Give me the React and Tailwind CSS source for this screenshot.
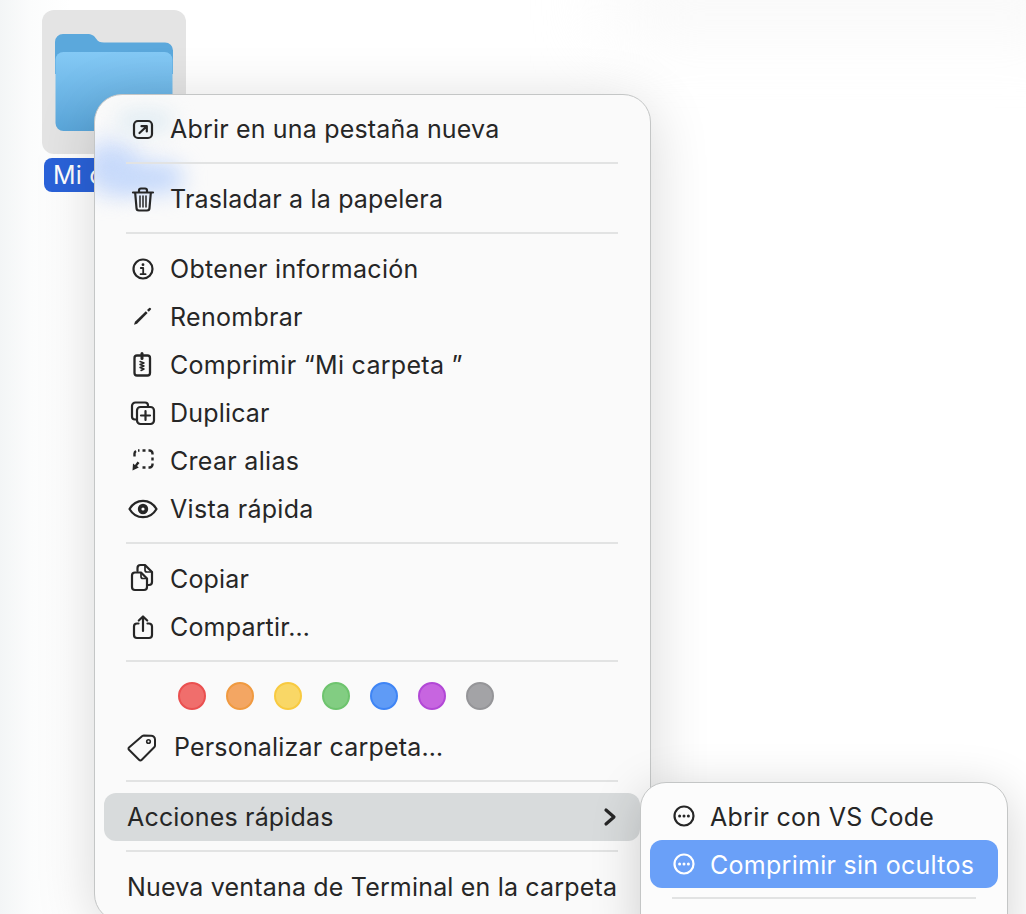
const S = "fill-none stroke-[#262626] stroke-[2] [stroke-linecap:round] [stroke-linejoin:round]";

function Ico({ children, className = "" }) {
  return (
    <svg viewBox="0 0 32 32" className={"w-8 h-8 shrink-0 " + S + " " + className}>
      {children}
    </svg>
  );
}

const icons = {
  open: (
    <Ico>
      <rect x="7" y="8" width="18" height="17" rx="4" strokeWidth="2.2" />
      <path d="M12.5 20 19.5 13.5M14.5 13.2H19.8V18.5" strokeWidth="2.2" />
    </Ico>
  ),
  trash: (
    <Ico>
      <path d="M6 9.5H26M12 9V7.5A2 2 0 0 1 14 5.5H18A2 2 0 0 1 20 7.5V9" strokeWidth="2.2" />
      <path d="M8.2 10 9.5 25A2.5 2.5 0 0 0 12 27.5H20A2.5 2.5 0 0 0 22.5 25L23.8 10" strokeWidth="2.2" />
      <path d="M13 13V24M16 13V24M19 13V24" strokeWidth="1.5" />
    </Ico>
  ),
  info: (
    <Ico>
      <circle cx="16" cy="16" r="9.5" strokeWidth="2.2" />
      <circle cx="16" cy="11.7" r="1.4" className="fill-[#262626] stroke-none" />
      <path d="M13.8 15H16.2V21M13.6 21.2H18.6" strokeWidth="1.8" />
    </Ico>
  ),
  pencil: (
    <Ico>
      <path d="M7 23.8 8 20.8 18.8 10.2 20.6 12 10 22.8Z" className="fill-[#262626] stroke-none" />
      <path d="M20 9 22.2 6.9A0.9 0.9 0 0 1 23.4 6.9L23.9 7.4A0.9 0.9 0 0 1 23.9 8.6L21.8 10.8Z" className="fill-[#262626] stroke-none" />
    </Ico>
  ),
  zip: (
    <Ico>
      <rect x="7.5" y="6.5" width="15.5" height="20" rx="2.5" strokeWidth="2.3" />
      <path d="M15 4.5V9.5" strokeWidth="3" />
      <path d="M13 12.5 17 14 13 15.5 17 17 13 18.5 17 20 14 21.5" strokeWidth="1.4" />
    </Ico>
  ),
  dup: (
    <Ico>
      <path d="M9.5 22.5H8A3 3 0 0 1 5 19.5V9A3.5 3.5 0 0 1 8.5 5.5H18A3 3 0 0 1 21 8.5V9.5" strokeWidth="2.2" />
      <rect x="10" y="10" width="17" height="17" rx="3.5" strokeWidth="2.2" />
      <path d="M18.5 14V23M14 18.5H23" strokeWidth="2.2" />
    </Ico>
  ),
  alias: (
    <Ico>
      <path
        d="M11 5.5H12.5M15.5 5.5H18.5M21.5 5.5H22.5A3 3 0 0 1 25.5 8.5V9.5M25.5 12.5V15.5M25.5 18.5V19.5A3 3 0 0 1 22.5 22.5H21.5M18.5 22.5H15.5M7.5 11.5V8.5A3 3 0 0 1 9 6"
        strokeWidth="2.4"
        strokeLinecap="butt"
      />
      <path d="M5.5 25.5 6 18.5 8 20 10.5 16.5 12.5 18 10 21 11.8 22.5Z" className="fill-[#262626] stroke-none" />
    </Ico>
  ),
  eye: (
    <Ico>
      <path d="M2.5 16C5.5 10.8 10.3 7.8 16 7.8S26.5 10.8 29.5 16C26.5 21.2 21.7 24.2 16 24.2S5.5 21.2 2.5 16Z" strokeWidth="2.2" />
      <circle cx="16" cy="16" r="5.2" className="fill-[#262626] stroke-none" />
      <circle cx="16" cy="16" r="1.6" className="fill-white stroke-none" />
    </Ico>
  ),
  copy: (
    <Ico>
      <path d="M8 9.5H14L20 15.5V24A3 3 0 0 1 17 27H8A3 3 0 0 1 5 24V12.5A3 3 0 0 1 8 9.5Z" strokeWidth="2.2" />
      <path d="M14 10V13.5A2 2 0 0 0 16 15.5H19.5" strokeWidth="1.7" />
      <path d="M10.5 8V5A3 3 0 0 1 13.5 2H18L25 9V19A3 3 0 0 1 22 22H20.5" strokeWidth="2.2" />
      <path d="M18 2.5V7A2 2 0 0 0 20 9H24.5" strokeWidth="1.7" />
    </Ico>
  ),
  share: (
    <Ico>
      <path d="M11.5 12.5H10A3 3 0 0 0 7 15.5V24A3 3 0 0 0 10 27H22A3 3 0 0 0 25 24V15.5A3 3 0 0 0 22 12.5H20.5" strokeWidth="2.2" />
      <path d="M16 20V6M11.8 9.5 16 5.5 20.2 9.5" strokeWidth="2.2" />
    </Ico>
  ),
  tag: (
    <Ico>
      <path d="M2 16.5 15.3 5A3 3 0 0 1 17 4.4L24 4.8A3.8 3.8 0 0 1 28 8.6V14.4A2.5 2.5 0 0 1 27.2 16.2L14.8 28.8A2 2 0 0 1 12 28.8L2 18.8A1.6 1.6 0 0 1 2 16.5Z" />
      <circle cx="21.5" cy="10.5" r="1.8" strokeWidth="1.6" />
    </Ico>
  ),
};

function Dots({ white }) {
  const stroke = white ? "stroke-white" : "stroke-[#262626]";
  const fill = white ? "fill-white" : "fill-[#262626]";
  return (
    <svg viewBox="0 0 32 32" className="w-8 h-8 shrink-0 fill-none">
      <circle cx="16" cy="16" r="9.5" className={stroke} strokeWidth="2.2" fill="none" />
      <circle cx="11.6" cy="16" r="1.5" className={fill} />
      <circle cx="16" cy="16" r="1.5" className={fill} />
      <circle cx="20.4" cy="16" r="1.5" className={fill} />
    </svg>
  );
}

function Sep() {
  return <div className="h-[2px] mt-[9px] mb-[11px] mx-[22px] bg-[#e2e3e3]" />;
}

function Row({ icon, wide, children }) {
  return (
    <div className="h-12 flex items-center gap-[11px] pl-[23px] pr-2 whitespace-nowrap">
      {icon}
      <span className={wide ? "tracking-[0.3px]" : ""}>{children}</span>
    </div>
  );
}

const tagColors = [
  "bg-[#f06e6c] border-[#ea5050]",
  "bg-[#f3a663] border-[#f09a40]",
  "bg-[#f9d766] border-[#f8ca40]",
  "bg-[#82cd82] border-[#6ec46e]",
  "bg-[#5f9bf6] border-[#3f85f5]",
  "bg-[#c765e0] border-[#b248d6]",
  "bg-[#a3a3a6] border-[#959598]",
];

export default function App() {
  return (
    <div
      className="relative w-[1026px] h-[914px] overflow-hidden bg-[linear-gradient(90deg,#f3f5f6_0px,#fbfcfc_30px,#ffffff_70px)] text-[25px] leading-8 text-[#262626] tracking-[0.18px]"
      style={{ fontFamily: '"Inter", "Liberation Sans", sans-serif' }}
    >
      {/* faint haze along the top of the desktop */}
      <div className="absolute left-[610px] -top-[24px] w-[480px] h-[44px] bg-[#f4f4f4] blur-2xl" />

      {/* desktop item */}
      <div className="absolute left-[42px] top-[10px] flex flex-col items-start">
        <div className="w-36 h-36 rounded-xl bg-[#e4e4e4] flex items-center justify-center">
          <svg viewBox="0 0 118 97" className="w-[118px] h-[97px]">
            <defs>
              <linearGradient id="folderFront" x1="0" y1="0" x2="0" y2="1">
                <stop offset="0" stopColor="#84c9f5" />
                <stop offset="1" stopColor="#5aa6da" />
              </linearGradient>
            </defs>
            <path d="M0 8A8 8 0 0 1 8 0H32C37 0 39 1.5 41 4.5 43 7.5 45 8.5 49 8.5H110A8 8 0 0 1 118 16.5V40H0Z" fill="#5ba8dc" />
            <rect x="0.5" y="18" width="117" height="79" rx="8" fill="url(#folderFront)" />
          </svg>
        </div>
        <div className="mt-1 ml-[2px] w-[140px] h-[34px] rounded-lg bg-[#2a62d9] text-white pl-[9px] flex items-center whitespace-nowrap">
          Mi carpeta
        </div>
      </div>

      {/* main context menu */}
      <div className="absolute left-[94px] top-[94px] w-[557px] rounded-[28px] border border-[#c4c6c6] bg-[#fafafa] shadow-[0_10px_60px_rgba(0,0,0,0.16)]">
        {/* colour of what lies under the menu, seen through it */}
        <div className="absolute inset-0 rounded-[27px] overflow-hidden">
          <div className="absolute -left-[12px] top-[46px] w-[56px] h-[52px] rounded-full bg-[#c8dafb] blur-[12px]" />
          <div className="absolute left-[16px] top-[68px] w-[72px] h-[30px] rounded-full bg-[#c4d8fb] blur-[11px]" />
          <div className="absolute left-[22px] top-[14px] w-[56px] h-[24px] rounded-full bg-[#e2edf3] blur-[10px]" />
        </div>
        <div className="relative pt-[10px] pb-[10px] pl-[9px] pr-[10px]">
          <Row icon={icons.open}>Abrir en una pestaña nueva</Row>
          <Sep />
          <Row icon={icons.trash}>Trasladar a la papelera</Row>
          <Sep />
          <Row icon={icons.info} wide>Obtener información</Row>
          <Row icon={icons.pencil} wide>Renombrar</Row>
          <Row icon={icons.zip} wide>Comprimir “Mi carpeta ”</Row>
          <Row icon={icons.dup}>Duplicar</Row>
          <Row icon={icons.alias} wide>Crear alias</Row>
          <Row icon={icons.eye} wide>Vista rápida</Row>
          <Sep />
          <Row icon={icons.copy}>Copiar</Row>
          <Row icon={icons.share}>Compartir…</Row>
          <Sep />
          <div className="h-[48px] -mt-[1px] flex items-center gap-5 pl-[74px]">
            {tagColors.map((c) => (
              <span key={c} className={"w-7 h-7 rounded-full border-2 " + c} />
            ))}
          </div>
          <div className="h-12 mt-[3px] flex items-center gap-[15px] pl-[23px] whitespace-nowrap">
            {icons.tag}
            <span>Personalizar carpeta…</span>
          </div>
          <Sep />
          <div className="h-12 flex items-center justify-between pl-[23px] pr-[23px] rounded-xl bg-[#d8dbdc]">
            <span>Acciones rápidas</span>
            <svg viewBox="0 0 14 22" className="w-[14px] h-[22px] fill-none stroke-[#262626] stroke-[3.2] [stroke-linecap:round] [stroke-linejoin:round]">
              <path d="M3 4 11 11 3 18" />
            </svg>
          </div>
          <Sep />
          <div className="h-12 flex items-center pl-[23px] whitespace-nowrap">Nueva ventana de Terminal en la carpeta</div>
        </div>
      </div>

      {/* submenu */}
      <div className="absolute left-[640px] top-[782px] w-[368px] h-[170px] rounded-[26px] border border-[#c4c6c6] bg-[#fcfcfc] shadow-[0_10px_50px_rgba(0,0,0,0.18)] pt-[9px] px-[9px] tracking-[0.28px]">
        <div className="h-12 flex items-center gap-[10px] pl-[18px] whitespace-nowrap">
          <Dots />
          <span className="mt-[2px]">Abrir con VS Code</span>
        </div>
        <div className="h-12 flex items-center gap-[10px] pl-[18px] rounded-xl bg-[#6aa0f8] text-white whitespace-nowrap">
          <Dots white />
          <span className="mt-[2px]">Comprimir sin ocultos</span>
        </div>
        <Sep />
      </div>
    </div>
  );
}
